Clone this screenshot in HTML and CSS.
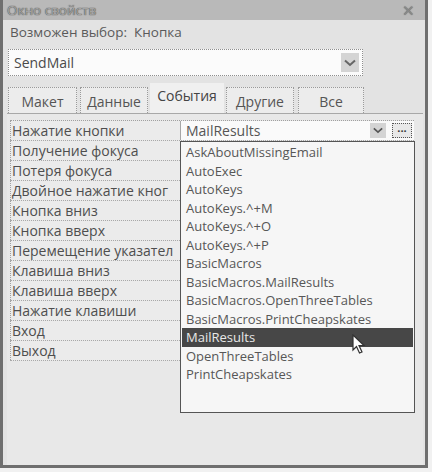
FILE: index.html
```html
<!DOCTYPE html>
<html lang="ru">
<head>
    <meta charset="UTF-8">
    <title>Окно свойств</title>
    <link rel="stylesheet" href="styles.css">
</head>
<body>
    <div class="window">
        <div class="titlebar">
            <span class="title">Окно свойств</span>
            <span class="close">&#x2715;</span>
        </div>
        <div class="content">
            <div class="selection">Возможен выбор:&nbsp;&nbsp;Кнопка</div>

            <div class="combo">
                <span>SendMail</span>
                <span class="arrow">
                    <svg width="12" height="8" viewBox="0 0 12 8"><path d="M1 1.5 L6 6 L11 1.5" fill="none" stroke="#666" stroke-width="2"/></svg>
                </span>
            </div>

            <div class="tabs">
                <div class="tab t1">Макет</div>
                <div class="tab t2">Данные</div>
                <div class="tab active">События</div>
                <div class="tab t4">Другие</div>
                <div class="tab t5">Все</div>
            </div>

            <div class="panel">
                <div class="grid">
                    <div class="row">
                        <div class="label">Нажатие кнопки</div>
                        <div class="value current">
                            <span class="val-text">MailResults</span>
                            <span class="arrow small">
                                <svg width="10" height="7" viewBox="0 0 12 8"><path d="M1 1.5 L6 6 L11 1.5" fill="none" stroke="#555" stroke-width="2"/></svg>
                            </span>
                            <span class="builder">...</span>
                        </div>
                    </div>
                    <div class="row"><div class="label">Получение фокуса</div><div class="value"></div></div>
                    <div class="row"><div class="label">Потеря фокуса</div><div class="value"></div></div>
                    <div class="row"><div class="label">Двойное нажатие кног</div><div class="value"></div></div>
                    <div class="row"><div class="label">Кнопка вниз</div><div class="value"></div></div>
                    <div class="row"><div class="label">Кнопка вверх</div><div class="value"></div></div>
                    <div class="row"><div class="label">Перемещение указател</div><div class="value"></div></div>
                    <div class="row"><div class="label">Клавиша вниз</div><div class="value"></div></div>
                    <div class="row"><div class="label">Клавиша вверх</div><div class="value"></div></div>
                    <div class="row"><div class="label">Нажатие клавиши</div><div class="value"></div></div>
                    <div class="row"><div class="label">Вход</div><div class="value"></div></div>
                    <div class="row"><div class="label">Выход</div><div class="value"></div></div>

                    <!-- opened list of macros -->
                    <ul class="dropdown">
                        <li>AskAboutMissingEmail</li>
                        <li>AutoExec</li>
                        <li>AutoKeys</li>
                        <li>AutoKeys.^+M</li>
                        <li>AutoKeys.^+O</li>
                        <li>AutoKeys.^+P</li>
                        <li>BasicMacros</li>
                        <li>BasicMacros.MailResults</li>
                        <li>BasicMacros.OpenThreeTables</li>
                        <li>BasicMacros.PrintCheapskates</li>
                        <li class="selected">MailResults</li>
                        <li>OpenThreeTables</li>
                        <li>PrintCheapskates</li>
                    </ul>
                    <svg class="cursor" width="14" height="20" viewBox="0 0 14 20">
                        <path d="M1 1 L1 16 L4.5 12.5 L7.5 19 L10 18 L7 11.5 L12 11.5 Z" fill="#fff" stroke="#333" stroke-width="1.2"/>
                    </svg>
                </div>
            </div>
        </div>
    </div>
</body>
</html>
```

FILE: styles.css
```css
/* Reset */
body, ul, li {
    margin: 0;
    padding: 0;
}

body {
    width: 432px;
    height: 472px;
    background-color: #f1f1f1;
    font-family: "Open Sans", "Noto Sans", sans-serif;
    font-size: 13px;
    color: #505050;
}

/* Window frame */
.window {
    width: 428px;
    height: 468px;
    box-sizing: border-box;
    border: 3px solid #6f6f6f;
    border-top-width: 0;
    background-color: #e3e3e3;
    display: flex;
    flex-direction: column;
}

.titlebar {
    height: 20px;
    background-color: #b9b9b9;
    display: flex;
    align-items: center;
    justify-content: space-between;
    padding: 0 10px 0 4px;
}

.title {
    color: #a4a4a4;
    font-size: 13.5px;
    text-shadow: 0 0 1px #555, 0 0 1px #555;
}

.close {
    color: #8a8a8a;
    font-size: 15px;
    text-shadow: 0 0 1px #555;
}

.content {
    flex: 1;
    display: flex;
    flex-direction: column;
    padding: 0 6px 0 5px;
}

.selection {
    height: 21px;
    line-height: 21px;
    padding-left: 2px;
    margin-top: 2px;
    font-size: 13.5px;
    color: #5a5a5a;
}

/* Object combo box */
.combo {
    width: 355px;
    height: 27px;
    box-sizing: border-box;
    margin-top: 6px;
    border: 1px dotted #8e8e8e;
    background-color: #fbfbfb;
    display: flex;
    align-items: center;
    justify-content: space-between;
    padding: 0 3px 0 5px;
    font-size: 14px;
    color: #4a4a4a;
}

.arrow {
    width: 18px;
    height: 19px;
    background-color: #d4d4d4;
    display: flex;
    align-items: center;
    justify-content: center;
}

.arrow.small {
    width: 16px;
    height: 15px;
    margin-left: auto;
}

/* Tabs */
.tabs {
    display: flex;
    align-items: flex-end;
    height: 30px;
    margin-top: 7px;
}

.tab {
    height: 26px;
    line-height: 27px;
    box-sizing: border-box;
    border: 1px dotted #9a9a9a;
    border-bottom: none;
    background-color: #ececec;
    text-align: center;
    font-size: 14px;
    color: #555;
}

.t1 { width: 69px; margin-right: 3px; }
.t2 { width: 68px; margin-right: 2px; }
.t4 { width: 68px; margin-left: 2px; margin-right: 4px; }
.t5 { width: 66px; }

.tab.active {
    width: 74px;
    height: 30px;
    line-height: 25px;
    border: none;
    background-color: #f0f0f0;
    color: #444;
}

/* Property sheet */
.panel {
    flex: 1;
    width: 413px;
    margin-left: -1px;
    border-top: 1px solid #a8a8a8;
    background-color: #e8e8e8;
    padding: 6px 0 0 3px;
}

.grid {
    position: relative;
    width: 404px;
    border-top: 1px dotted #a0a0a0;
}

.row {
    display: flex;
    height: 20px;
    box-sizing: border-box;
    border-bottom: 1px dotted #a8a8a8;
    font-size: 14px;
}

.label {
    width: 168px;
    padding-left: 1px;
    line-height: 19px;
    border-left: 1px dotted #a0a0a0;
    border-right: 1px solid #a6a6a6;
    background-color: #ebebeb;
    color: #4e4e4e;
    white-space: nowrap;
    overflow: hidden;
}

.value {
    flex: 1;
    background-color: #f4f4f4;
    line-height: 19px;
}

.value.current {
    display: flex;
    align-items: center;
    padding-left: 5px;
    background-color: #fafafa;
}

.val-text {
    color: #555;
}

.builder {
    width: 20px;
    height: 15px;
    box-sizing: border-box;
    margin-left: 6px;
    margin-right: 2px;
    border: 1px dotted #555;
    background-color: #e8e8e8;
    font-size: 11px;
    line-height: 8px;
    text-align: center;
    font-weight: bold;
    color: #333;
}

/* Dropdown list */
.dropdown {
    position: absolute;
    top: 20px;
    left: 170px;
    width: 235px;
    height: 272px;
    box-sizing: border-box;
    list-style: none;
    padding: 1px 1px 0 1px;
    border: 1px solid #555;
    background-color: #f6f6f6;
}

.dropdown li {
    height: 18.5px;
    line-height: 18.5px;
    padding-left: 4px;
    font-size: 13px;
    color: #575757;
    white-space: nowrap;
}

.dropdown li.selected {
    background-color: #474747;
    color: #e8e8e8;
}

.cursor {
    position: absolute;
    top: 213px;
    left: 342px;
}
```
